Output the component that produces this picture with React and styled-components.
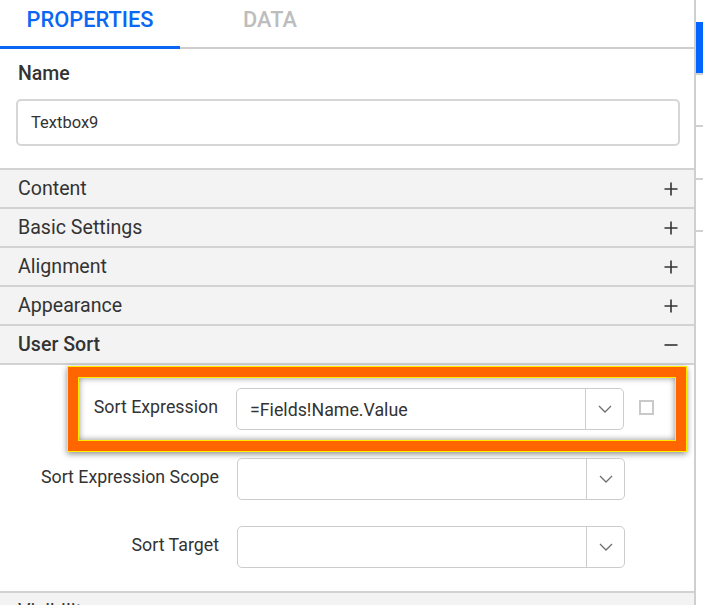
import { createGlobalStyle } from 'styled-components';
import styled from 'styled-components';

const GlobalStyle = createGlobalStyle`
  html, body {
    margin: 0;
    padding: 0;
    background: #fff;
    overflow: hidden;
  }
  body {
    font-family: Roboto, "Liberation Sans", Arial, sans-serif;
    color: #333;
  }
`;

const Page = styled.div`
  display: flex;
  width: 703px;
  height: 605px;
  overflow: hidden;
`;

const Panel = styled.div`
  width: 694px;
  flex-shrink: 0;
  border-right: 2px solid #cfcfcf;
  display: flex;
  flex-direction: column;

  & > * {
    flex-shrink: 0;
  }
`;

const SideStrip = styled.div`
  flex: 1;
  padding-top: 22px;
  display: flex;
  flex-direction: column;
`;

const SideItem = styled.div`
  height: ${(p) => p.$h}px;
  flex-shrink: 0;
  background: ${(p) => (p.$active ? '#0066ff' : '#fff')};
  border-bottom: 2px solid #d0d0d0;
`;

const TabBar = styled.div`
  display: flex;
  height: 49px;
  box-shadow: inset 0 -2px 0 #cdcdcd;
`;

const Tab = styled.div`
  width: 180px;
  display: flex;
  align-items: center;
  justify-content: center;
  padding-bottom: 11px;
  box-sizing: border-box;
  font-size: 21.8px;
  font-weight: 500;
  color: ${(p) => (p.$active ? '#0a66f5' : '#bdbdbd')};
  box-shadow: ${(p) => (p.$active ? 'inset 0 -3px 0 #0a66f5' : 'none')};
`;

const NameBlock = styled.div`
  padding: 14px 14px 22px 16px;
  display: flex;
  flex-direction: column;
`;

const FieldTitle = styled.div`
  font-size: 19.5px;
  font-weight: 500;
  color: #333;
  padding-left: 2px;
  height: 22px;
  line-height: 22px;
  margin-bottom: 14px;
`;

const TextBox = styled.div`
  height: 47px;
  box-sizing: border-box;
  border: 2px solid #d6d6d6;
  border-radius: 5px;
  display: flex;
  align-items: center;
  padding-left: 13px;
  font-size: 16.5px;
  color: #333;
`;

const SectionRow = styled.div`
  height: 39px;
  box-sizing: border-box;
  border-top: 2px solid #d2d2d2;
  background: #f3f3f3;
  display: flex;
  align-items: center;
  justify-content: space-between;
  padding: 0 16px 0 18px;
  font-size: 19.6px;
  font-weight: ${(p) => (p.$open ? 500 : 400)};
  color: #333;
`;

const FormArea = styled.div`
  border-top: 2px solid #d2d2d2;
  padding: 1px 0 23px;
  display: flex;
  flex-direction: column;
`;

const Highlight = styled.div`
  margin-left: 67px;
  width: 620px;
  box-sizing: border-box;
  border: 1px solid #ffee00;
  background: #ff6600;
  padding: 10px;
  box-shadow: 0 2px 6px rgba(0, 0, 0, 0.45);
`;

const HighlightInner = styled.div`
  border: 1px solid #ffee00;
  background: #fff;
  height: 64px;
  box-sizing: border-box;
  box-shadow: inset 0 0 6px rgba(0, 0, 0, 0.45);
  display: flex;
  align-items: center;
`;

const FieldRow = styled.div`
  display: flex;
  align-items: center;
  margin-top: ${(p) => p.$top || 0}px;
`;

const FieldLabel = styled.div`
  width: ${(p) => p.$w}px;
  text-align: right;
  margin-right: 18px;
  font-size: 17.8px;
  color: #333;
  margin-top: -6px;
  white-space: nowrap;
`;

const Select = styled.div`
  width: 388px;
  height: 42px;
  box-sizing: border-box;
  border: 1px solid #cccccc;
  border-radius: 5px;
  display: flex;
  align-items: stretch;
  background: #fff;
`;

const SelectValue = styled.div`
  flex: 1;
  display: flex;
  align-items: center;
  padding-left: 13px;
  font-size: 17.8px;
  color: #333;
`;

const SelectButton = styled.div`
  width: 37px;
  border-left: 1px solid #cccccc;
  display: flex;
  align-items: center;
  justify-content: center;
`;

const CheckBox = styled.div`
  width: 15px;
  height: 15px;
  box-sizing: border-box;
  border: 2px solid #c9c9c9;
  margin-left: 15px;
  margin-top: -4px;
`;

const Chevron = () => (
  <svg width="14" height="8" viewBox="0 0 14 8">
    <path d="M1 1 L7 7 L13 1" fill="none" stroke="#6f6f6f" strokeWidth="1.3" />
  </svg>
);

const Plus = () => (
  <svg width="14" height="14" viewBox="0 0 14 14">
    <path d="M7 0.5 V13.5 M0.5 7 H13.5" stroke="#333" strokeWidth="1.6" />
  </svg>
);

const Minus = () => (
  <svg width="14" height="14" viewBox="0 0 14 14">
    <path d="M0.5 7 H13.5" stroke="#333" strokeWidth="1.6" />
  </svg>
);

const sections = ['Content', 'Basic Settings', 'Alignment', 'Appearance'];

function SelectField({ value }) {
  return (
    <Select>
      <SelectValue>{value}</SelectValue>
      <SelectButton>
        <Chevron />
      </SelectButton>
    </Select>
  );
}

export default function App() {
  return (
    <>
      <GlobalStyle />
      <Page>
        <Panel>
          <TabBar>
            <Tab $active>PROPERTIES</Tab>
            <Tab>DATA</Tab>
          </TabBar>

          <NameBlock>
            <FieldTitle>Name</FieldTitle>
            <TextBox>Textbox9</TextBox>
          </NameBlock>

          {sections.map((s) => (
            <SectionRow key={s}>
              {s}
              <Plus />
            </SectionRow>
          ))}
          <SectionRow $open>
            User Sort
            <Minus />
          </SectionRow>

          <FormArea>
            <Highlight>
              <HighlightInner>
                <FieldRow>
                  <FieldLabel $w={139}>Sort Expression</FieldLabel>
                  <SelectField value="=Fields!Name.Value" />
                  <CheckBox />
                </FieldRow>
              </HighlightInner>
            </Highlight>
            <FieldRow $top={6}>
              <FieldLabel $w={219}>Sort Expression Scope</FieldLabel>
              <SelectField value="" />
            </FieldRow>
            <FieldRow $top={26}>
              <FieldLabel $w={219}>Sort Target</FieldLabel>
              <SelectField value="" />
            </FieldRow>
          </FormArea>

          <SectionRow>
            Visibility
            <Plus />
          </SectionRow>
        </Panel>
        <SideStrip>
          <SideItem $active $h={51} />
          <SideItem $h={50} />
          <SideItem $h={51} />
          <SideItem $h={50} />
        </SideStrip>
      </Page>
    </>
  );
}
